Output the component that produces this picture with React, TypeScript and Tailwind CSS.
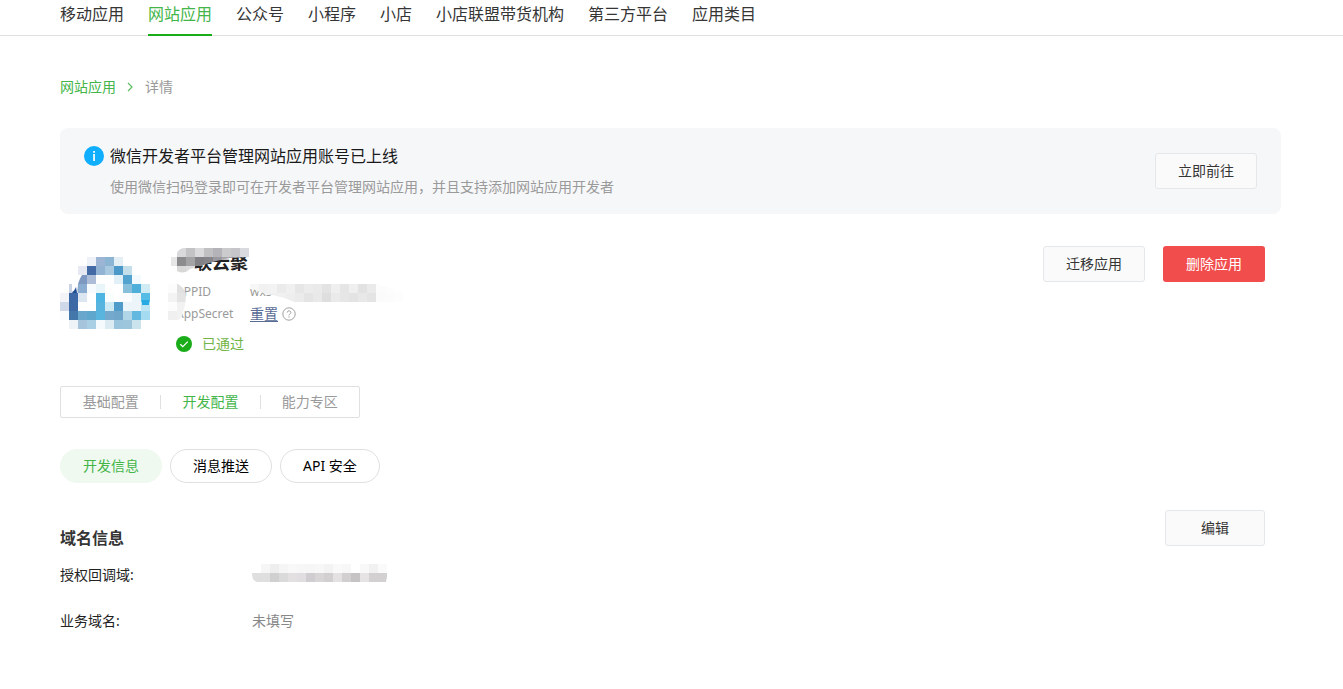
import {clsx} from "clsx";
import {useId} from "react";

const navLinks = [
    {title: "移动应用", href: "#mobile"},
    {title: "网站应用", href: "#website", active: true},
    {title: "公众号", href: "#official"},
    {title: "小程序", href: "#mini"},
    {title: "小店", href: "#shop"},
    {title: "小店联盟带货机构", href: "#league"},
    {title: "第三方平台", href: "#platform"},
    {title: "应用类目", href: "#category"},
];

const sections = [
    {title: "基础配置", href: "#basic"},
    {title: "开发配置", href: "#develop", active: true},
    {title: "能力专区", href: "#ability"},
];

const pills = [
    {title: "开发信息", active: true},
    {title: "消息推送"},
    {title: "API 安全"},
];

// one string per row, cells separated by spaces, "-" leaves a cell empty
const logoCells = [
    "- - - eef1f7 9db5d4 8cb4d3 e3eff4 - - -",
    "- - e6e9f2 446aa5 93b3d3 a8c9df 4a99c8 c3e0ea - -",
    "- - 7f98c2 adbcd7 - - e0f0f6 53a3cf f3fafd -",
    "- - 8badd2 f7fbfd e8f6fa - - 88bfdb 4eafdb cfebf4",
    "f2f4f8 3d6aa6 dce6f0 - 4eb4e2 fafdfe - fafcfe ecf5fa 55bce6",
    "cfd8e8 3f69a4 - - 56b4df cde9f4 4f9bc9 ecf6fa edf5fa bfe5f4",
    "fafbfd 4478ab 6aa7cd 60a7ce 5ab5de 74a8cc 6fa6ca b0d6e8 62b8df a5dbf0",
    "- eef3f8 a6c5dd a8cfe3 f5fafd dcebf2 9bc5dc 9dc5dc cbe3ed -",
];

const nameCells = [
    "- d9d9db c3c3c5 dadadc c0c0c3 b4b4b8 cbcbce c6c6ca d8dae0",
    "e6e6e6 8c8c8e a3a3a6 828286 86868a 98989e a5a5ac 9a9aa4 a8a8b2",
    "- d8d8d8 dcdcdc - - - - - -",
];

const labelCells = [
    "fcfcfc e0e0e0",
    "f3f3f3 e4e4e4",
    "fcfcfc f2f2f2",
    "f0f0f0 f2f2f2",
];

const appIdCells = [
    "f7f7f7 f1f1f1 f3f3f3 ebebeb f0f0f0 e6e6e6 ececec eaeaea e3e3e3 efefef e5e5e5 efefef e2e2e2 eaeaea fcfcfc fdfdfd fefefe",
    "f4f4f4 f4f4f4 f0f0f0 f0f0f0 eeeeee ebebeb e4e4e4 e9e9e9 dedede eaeaea e6e6e6 e3e3e3 e8e8e8 e4e4e4 fbfbfb fcfcfc fdfdfd",
];

const domainCells = [
    "- f6f6f6 eeeeee f5f5f5 f8f8f8 f7f7f7 f6f6f6 f7f7f7 f3f3f3 f9f9f9 f7f7f7 - f8f8f8 f1f1f1 fafafa",
    "dfdfdf e0dfdf d1d0d1 dbdadb e2e0e1 e0dee0 cfcdcf d7d5d6 d1cfd0 e3e1e2 d1cfd0 c5c3c4 e5e3e4 d3d0d1 d3d0d1",
    "- - - - - - - - - - - f3f3f3 - - -",
];

type MosaicProps = {
    cells: string[];
    clip?: string;
    className?: string;
    children?: React.ReactNode;
};

function Mosaic({cells, clip, className, children}: MosaicProps) {
    const id = useId();
    const rows = cells.map((row) => row.split(" "));
    const width = rows[0].length * 9;
    const height = rows.length * 9;

    return (
        <svg width={width} height={height} viewBox={`0 0 ${width} ${height}`} className={className} aria-hidden="true">
            {clip && <clipPath id={id}><path d={clip}/></clipPath>}
            <g clipPath={clip ? `url(#${id})` : undefined} shapeRendering="crispEdges">
                {rows.map((row, y) =>
                    row.map((fill, x) =>
                        fill === "-" ? null : (
                            <rect key={`c_${y}_${x}`} x={x * 9} y={y * 9} width={9} height={9} fill={`#${fill}`}/>
                        )
                    )
                )}
            </g>
            {children}
        </svg>
    );
}

function OutlineButton({children, wide}: {children: React.ReactNode; wide?: boolean}) {
    return (
        <button
            type="button"
            className={clsx(
                "h-9 shrink-0 rounded-[3px] border border-[#e4e8eb] bg-[#fafafa] text-sm text-[#353535]",
                wide ? "w-[100px]" : "px-[22px]"
            )}
        >
            {children}
        </button>
    );
}

function TopNav() {
    return (
        <nav className="flex h-9 gap-6 border-b border-[#e0e0e0] px-[60px]">
            {navLinks.map(({title, href, active}) => (
                <a
                    key={href}
                    href={href}
                    className={clsx(
                        "-mb-px h-9 whitespace-nowrap text-base leading-7",
                        active ? "border-b-2 border-[#1aad19] text-[#44b549]" : "text-[#353535]"
                    )}
                >
                    {title}
                </a>
            ))}
        </nav>
    );
}

function Notice() {
    return (
        <section className="mt-[31px] flex items-center justify-between rounded-lg bg-[#f6f7f9] px-6 py-4">
            <div className="flex gap-[6px]">
                <svg width="20" height="20" viewBox="0 0 20 20" className="mt-0.5 shrink-0" aria-hidden="true">
                    <circle cx="10" cy="10" r="10" fill="#10aeff"/>
                    <rect x="9.2" y="5" width="1.7" height="1.8" fill="#fff"/>
                    <rect x="9.2" y="8" width="1.7" height="7" fill="#fff"/>
                </svg>
                <div>
                    <h2 className="text-base leading-6 text-[#1a1a1a]">微信开发者平台管理网站应用账号已上线</h2>
                    <p className="mt-2 text-sm leading-[22px] text-[#9a9a9a]">
                        使用微信扫码登录即可在开发者平台管理网站应用，并且支持添加网站应用开发者
                    </p>
                </div>
            </div>
            <OutlineButton>立即前往</OutlineButton>
        </section>
    );
}

function AppSummary() {
    return (
        <section className="mt-8 flex items-start justify-between pr-4">
            <div className="flex gap-[26px] pt-0.5">
                <Mosaic cells={logoCells} className="mt-[9px] shrink-0">
                    <path d="M9 27h3v7l4 2 2-8v8H9z" fill="#cad3e3"/>
                    <path d="M12 36c1-2 3-3 4-6l1 6z" fill="#1d4f92"/>
                    <path d="M18 18h4c-2 3-3 6-4 9z" fill="#fff"/>
                    <path d="M82 43h7v5h-7z" fill="#27abe2"/>
                </Mosaic>
                <div className="relative">
                    <h1 className="pl-[18px] text-lg font-bold leading-7 text-[#222]">联云聚</h1>
                    <dl className="mt-[5px] grid grid-cols-[74px_auto] text-xs leading-[22px] text-[#9a9a9a]">
                        <dt>APPID</dt>
                        <dd>wxs</dd>
                        <dt>AppSecret</dt>
                        <dd className="flex items-center gap-1 text-sm leading-[22px]">
                            <a href="#reset" className="text-[#576b95] underline underline-offset-2">重置</a>
                            <svg width="14" height="14" viewBox="0 0 14 14" fill="none" stroke="#a0a0a0" aria-hidden="true">
                                <circle cx="7" cy="7" r="6.2"/>
                                <path d="M5.2 5.6c0-2.4 3.7-2.3 3.7-.1 0 1.4-1.9 1.4-1.9 2.9M7 9.4v1.2"/>
                            </svg>
                        </dd>
                    </dl>
                    <p className="mt-2 flex items-center gap-[10px] text-sm leading-[22px] text-[#72b445]">
                        <svg width="16" height="16" viewBox="0 0 16 16" aria-hidden="true">
                            <circle cx="8" cy="8" r="8" fill="#1aad19"/>
                            <path d="M4.3 8.2l2.5 2.4 5-5" fill="none" stroke="#fff" strokeWidth="1.2"/>
                        </svg>
                        已通过
                    </p>
                    <Mosaic
                        cells={nameCells}
                        clip="M9 5Q11 0 17 0H81V9L62 10Q45 13 33 18L22 21Q16 27 9 23V18H3V9H9z"
                        className="absolute -left-2 top-0"
                    />
                    <Mosaic
                        cells={labelCells}
                        clip="M0 0H10Q18 5 18 12Q18 20 15 28Q14 36 9 36H0z"
                        className="absolute -left-2 top-9"
                    />
                    <Mosaic
                        cells={appIdCells}
                        clip="M0 0H126L153 7V18H44Q36 14 22 11Q8 9 0 3z"
                        className="absolute left-[74px] top-9"
                    />
                </div>
            </div>
            <div className="flex gap-[18px]">
                <OutlineButton>迁移应用</OutlineButton>
                <button type="button" className="h-9 rounded-[3px] bg-[#f24d4d] px-[23px] text-sm text-white">
                    删除应用
                </button>
            </div>
        </section>
    );
}

function DomainInfo() {
    return (
        <section className="mt-[27px] pr-4">
            <div className="flex items-start justify-between">
                <h2 className="mt-4 text-base font-bold leading-6 text-[#353535]">域名信息</h2>
                <OutlineButton wide>编辑</OutlineButton>
            </div>
            <dl className="mt-[14px] grid grid-cols-[192px_auto] gap-y-6 text-sm leading-[22px]">
                <dt className="text-[#222]">授权回调域:</dt>
                <dd className="h-[22px]">
                    <Mosaic cells={domainCells} clip="M0 0H136V7L134 18H95V27H84V18H5Q0 17 0 9z"/>
                </dd>
                <dt className="text-[#222]">业务域名:</dt>
                <dd className="text-[#888]">未填写</dd>
            </dl>
        </section>
    );
}

export default function App() {
    return (
        <div className="bg-white font-['Noto_Sans','Noto_Sans_CJK_SC',sans-serif]">
            <TopNav/>
            <main className="pl-[60px] pr-[62px] pt-[41px]">
                <div className="flex items-center text-sm leading-5">
                    <a href="#website" className="text-[#44b549]">网站应用</a>
                    <svg width="6" height="10" viewBox="0 0 6 10" fill="none" stroke="#5cbe60" className="ml-[11px] mr-3" aria-hidden="true">
                        <path d="M1 1l4 4-4 4" strokeWidth="1.2"/>
                    </svg>
                    <span className="text-[#9a9a9a]">详情</span>
                </div>

                <Notice/>
                <AppSummary/>

                <div className="mt-[31px] grid h-8 w-[300px] grid-cols-3 items-center rounded-xs border border-[#e0e0e0] text-center text-sm">
                    {sections.map(({title, href, active}, i) => (
                        <a
                            key={href}
                            href={href}
                            className={clsx(
                                "leading-[14px]",
                                i > 0 && "border-l border-[#e0e0e0]",
                                active ? "text-[#44b549]" : "text-[#9a9a9a]"
                            )}
                        >
                            {title}
                        </a>
                    ))}
                </div>

                <div className="mt-[31px] flex gap-2">
                    {pills.map(({title, active}) => (
                        <button
                            key={title}
                            type="button"
                            className={clsx(
                                "h-[34px] rounded-full border px-[22px] text-sm",
                                active ? "border-[#eff9f0] bg-[#eff9f0] text-[#44b549]" : "border-[#e0e0e0] text-black"
                            )}
                        >
                            {title}
                        </button>
                    ))}
                </div>

                <DomainInfo/>
            </main>
        </div>
    );
}
